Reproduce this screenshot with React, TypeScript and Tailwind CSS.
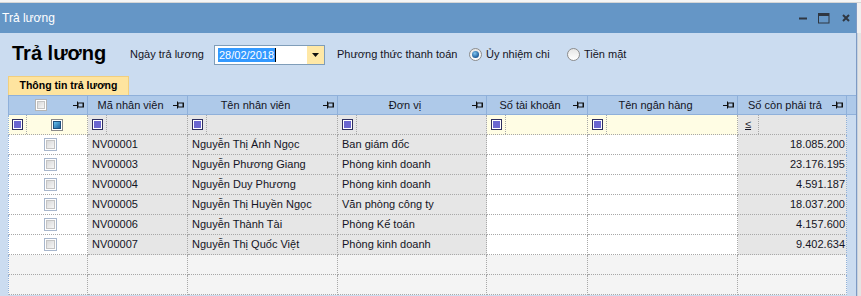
import React from "react";

type Row = { code: string; name: string; dept: string; amount: string };

const rows: Row[] = [
  { code: "NV00001", name: "Nguyễn Thị Ánh Ngọc", dept: "Ban giám đốc", amount: "18.085.200" },
  { code: "NV00003", name: "Nguyễn Phương Giang", dept: "Phòng kinh doanh", amount: "23.176.195" },
  { code: "NV00004", name: "Nguyễn Duy Phương", dept: "Phòng kinh doanh", amount: "4.591.187" },
  { code: "NV00005", name: "Nguyễn Thị Huyền Ngọc", dept: "Văn phòng công ty", amount: "18.037.200" },
  { code: "NV00006", name: "Nguyễn Thành Tài", dept: "Phòng Kế toán", amount: "4.157.600" },
  { code: "NV00007", name: "Nguyễn Thị Quốc Việt", dept: "Phòng kinh doanh", amount: "9.402.634" },
];

function Pin() {
  return (
    <svg width="11" height="8" viewBox="0 0 11 8" className="shrink-0">
      <path d="M0 4.5H4.5" stroke="#111" strokeWidth="1" />
      <path d="M4.5 0.5V7.5" stroke="#111" strokeWidth="1" />
      <rect x="5" y="2" width="5.5" height="4" fill="none" stroke="#111" strokeWidth="1" />
      <path d="M10 2V6" stroke="#111" strokeWidth="1" />
    </svg>
  );
}

function FilterIcon() {
  return (
    <span className="w-[11px] h-[11px] shrink-0 border border-[#2e2e5e] bg-white p-[1px] flex">
      <span className="flex-1 bg-[#6a66d0]" />
    </span>
  );
}

function Check({ header }: { header?: boolean }) {
  return (
    <span
      className={
        header
          ? "w-[12px] h-[12px] border border-[#b4b4b4] bg-white p-[1px] flex"
          : "w-[13px] h-[13px] border border-[#a7b6cc] bg-white p-[1px] flex"
      }
    >
      <span className="flex-1 border border-[#c4c4c4] bg-[linear-gradient(135deg,#d8d8d8,#f6f6f6)]" />
    </span>
  );
}

function Radio({ on }: { on?: boolean }) {
  return (
    <span className="w-[13px] h-[13px] rounded-full border border-[#8c8c8c] bg-[linear-gradient(180deg,#e6e6e6,#ffffff)] flex items-center justify-center">
      {on && (
        <span className="w-[7px] h-[7px] rounded-full bg-[radial-gradient(circle_at_40%_35%,#7fc4f0,#1c5a98_70%)]" />
      )}
    </span>
  );
}

const widths = ["w-[80px]", "w-[100px]", "w-[150px]", "w-[149px]", "w-[101px]", "w-[150px]", "w-[109px]"];
const heads = ["", "Mã nhân viên", "Tên nhân viên", "Đơn vị", "Số tài khoản", "Tên ngân hàng", "Số còn phải trả"];
const readOnly = [false, true, true, true, false, false, true];

export default function App() {
  return (
    <div className="w-[861px] h-[296px] overflow-hidden bg-[#f0f0f0] font-['Liberation_Sans',Arial,sans-serif] text-[11px] text-[#141424]">
      <div className="h-[3px] bg-[#f5f5f5] border-b border-[#d6d6d6]" />
      <div className="flex h-[293px]">
        <div className="w-[857px] flex flex-col border-r border-[#7d9ac4]">
          {/* title bar */}
          <div className="h-[30px] bg-[#6596c6] flex items-center pl-[2px] pr-[6px]">
            <span className="text-white text-[12px] flex-1">Trả lương</span>
            <svg width="9" height="3" viewBox="0 0 9 3">
              <rect width="8" height="2" y="0.5" fill="#2f3742" />
            </svg>
            <svg width="12" height="11" viewBox="0 0 12 11" className="ml-[10px]">
              <rect x="0.5" y="0.5" width="10.5" height="9.5" fill="none" stroke="#2f3742" />
              <rect x="0.5" y="0.5" width="10.5" height="2.5" fill="#2f3742" />
            </svg>
            <svg width="8" height="8" viewBox="0 0 8 8" className="ml-[12px]">
              <path d="M1 1L7 7M7 1L1 7" stroke="#2f3742" strokeWidth="2" />
            </svg>
          </div>

          {/* body */}
          <div className="flex-1 bg-[#cbdcf0] flex flex-col">
            <div className="h-[43px] flex items-center">
              <span className="w-[130px] pl-[12px] text-[20px] font-bold text-black leading-none pb-[3px]">Trả lương</span>
              <span className="w-[84px]">Ngày trả lương</span>
              <div className="w-[111px] h-[20px] border border-[#7f9db9] bg-white flex items-center">
                <span className="ml-[3px] bg-[#3399ff] text-white leading-[14px] px-[1px]">28/02/2018</span>
                <span className="w-[1px] h-[14px] bg-black" />
                <span className="ml-auto w-[17px] h-full bg-[#ffe8a6] flex items-center justify-center">
                  <svg width="7" height="4" viewBox="0 0 7 4">
                    <path d="M0 0H7L3.5 4Z" fill="#111" />
                  </svg>
                </span>
              </div>
              <span className="ml-[12px] w-[132px]">Phương thức thanh toán</span>
              <Radio on />
              <span className="ml-[4px] w-[81px]">Ủy nhiệm chi</span>
              <Radio />
              <span className="ml-[4px]">Tiền mặt</span>
            </div>

            {/* tab */}
            <div className="h-[19px] pl-[8px] flex">
              <div className="w-[121px] bg-[#fee49f] border border-b-0 border-[#f2cf7e] flex items-center justify-center font-bold text-[10.5px] text-black">
                Thông tin trả lương
              </div>
            </div>

            {/* grid */}
            <div className="ml-[8px] flex flex-col">
              <div className="flex h-[20px] bg-[#aec9e9] border-y border-[#8fb0da]">
                {heads.map((h, i) => (
                  <div
                    key={i}
                    className={`${widths[i]} flex items-center pr-[3px] border-r border-[#8fb0da] ${i === 0 ? "border-l" : ""}`}
                  >
                    <span className="flex-1 flex justify-center">{i === 0 ? <Check header /> : h}</span>
                    <Pin />
                  </div>
                ))}
              </div>

              {/* filter row */}
              <div className="flex h-[20px]">
                {heads.map((_, i) => (
                  <div
                    key={i}
                    className={`${widths[i]} flex items-center border-b border-dotted border-b-[#a8a8a8] ${
                      i === 6 ? "border-r border-r-[#8fb0da]" : "border-r border-dotted border-r-[#a8a8a8]"
                    } ${i === 0 ? "border-l border-l-[#8fb0da] pl-[3px]" : "pl-[4px]"} ${
                      readOnly[i] ? "bg-[#e6e6e6]" : "bg-[#fffde4]"
                    }`}
                  >
                    {i === 6 ? (
                      <span className="ml-[3px] w-[10px] underline">≤</span>
                    ) : (
                      <FilterIcon />
                    )}
                    <span className="ml-[3px] h-full border-l border-dotted border-[#a8a8a8]" />
                    {i === 0 && (
                      <span className="ml-[24px] w-[12px] h-[12px] border border-[#8a8a8a] bg-white p-[1px] flex">
                        <span className="flex-1 border border-[#1d4f7e] bg-[linear-gradient(135deg,#66c0ee,#1a5f9c)]" />
                      </span>
                    )}
                  </div>
                ))}
              </div>

              {rows.map((r) => {
                const cells = [null, r.code, r.name, r.dept, "", "", r.amount];
                return (
                  <div key={r.code} className="flex h-[20px]">
                    {cells.map((c, i) => (
                      <div
                        key={i}
                        className={`${widths[i]} flex items-center border-b border-dotted border-b-[#a8a8a8] ${
                          i === 6 ? "border-r border-r-[#8fb0da] justify-end pr-[1px]" : "border-r border-dotted border-r-[#a8a8a8] pl-[4px]"
                        } ${i === 0 ? "border-l border-l-[#8fb0da] justify-center" : ""} ${
                          readOnly[i] ? "bg-[#e6e6e6]" : "bg-white"
                        } whitespace-nowrap`}
                      >
                        {i === 0 ? <Check /> : c}
                      </div>
                    ))}
                  </div>
                );
              })}

              {[0, 1].map((k) => (
                <div key={k} className="flex h-[20px]">
                  {widths.map((w, i) => (
                    <div
                      key={i}
                      className={`${w} bg-[#f4f4f4] border-b border-dotted border-b-[#a8a8a8] ${
                        i === 6 ? "border-r border-r-[#8fb0da]" : "border-r border-dotted border-r-[#a8a8a8]"
                      } ${i === 0 ? "border-l border-l-[#8fb0da]" : ""}`}
                    />
                  ))}
                </div>
              ))}
            </div>
          </div>
        </div>
        <div className="flex-1 flex flex-col">
          <div className="h-[30px] bg-[#f0f0f0]" />
          <div className="flex-1 bg-[#e4e4e4] border-l border-[#c8d2de]" />
        </div>
      </div>
    </div>
  );
}
